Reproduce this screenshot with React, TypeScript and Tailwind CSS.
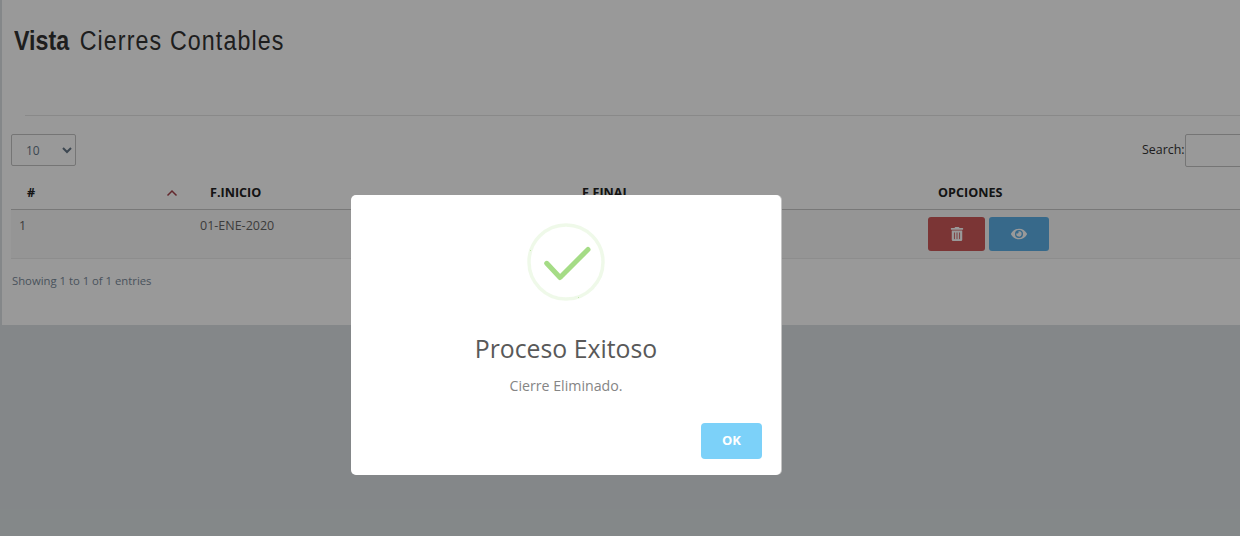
import { FaEye, FaTrashAlt } from 'react-icons/fa';

const sans = "font-['Open_Sans',sans-serif]";

function SuccessIcon() {
  return (
    <svg width="80" height="80" viewBox="0 0 80 80" className="block">
      <circle cx="40" cy="40" r="37" fill="none" stroke="#a5dc86" strokeOpacity="0.18" strokeWidth="3.5" />
      <path d="M4 28 L5 29 M52 75 L53 76" stroke="#a5dc86" strokeOpacity="0.6" strokeWidth="1" />
      <path d="M20.7 41.3 L34 55.5 L62 27.5" fill="none" stroke="#a5dc86" strokeWidth="5" strokeLinecap="round" strokeLinejoin="round" />
    </svg>
  );
}

export default function App() {
  return (
    <div className={`relative h-[536px] w-[1240px] overflow-hidden bg-[#dce2e5] ${sans}`}>
      {/* Card */}
      <div className="ml-[2px] h-[325px] overflow-hidden bg-white pl-[9px]">
        <div className="pl-[3px] pt-[25px]">
          {/* no narrow family installed, so squeeze the heading */}
          <h1 className="origin-left scale-x-[0.86] whitespace-nowrap font-['Liberation_Sans',sans-serif] text-[27px] leading-[32px] tracking-[1.3px] text-[#333]">
            <span className="font-bold tracking-[0px]">Vista</span> <span className="ml-[3.5px]">Cierres Contables</span>
          </h1>
        </div>

        <div className="ml-[14px] mt-[58px] h-px bg-[#e4e4e4]" />

        <div className="mt-[18px] flex h-[33px] items-start justify-between">
          <select
            defaultValue="10"
            className="h-[32px] w-[65px] rounded-[2px] border border-[#c4c4c4] bg-white pl-[10px] text-[12px] text-[#667788]"
          >
            <option value="10">10</option>
          </select>
          <div className="flex w-[98px] items-center text-[12.4px] text-[#333]">
            <span>Search:</span>
            <div className="h-[33px] w-[60px] shrink-0 rounded-[2px] border border-[#c4c4c4] bg-white" />
          </div>
        </div>

        {/* Table */}
        <div className="mt-[8px] flex h-[35px] items-center border-b border-[#c9c9c9] pt-[3px] text-[12.6px] font-bold text-[#222]">
          <span className="ml-[16px] w-[139px]">#</span>
          <svg width="12" height="8" viewBox="0 0 12 8" className="mr-[32px] -translate-y-px">
            <path d="M1.5 6.5 L6 2 L10.5 6.5" fill="none" stroke="#a5434b" strokeWidth="1.5" />
          </svg>
          <span className="w-[372px]">F.INICIO</span>
          <span className="w-[356px]">F.FINAL</span>
          <span>OPCIONES</span>
        </div>
        <div className="flex h-[49px] border-b border-[#ececec] bg-[#f9f9f9] text-[12.5px] text-[#666]">
          <span className="ml-[8px] w-[181px] pt-[7px]">1</span>
          <span className="w-[728px] pt-[7px]">01-ENE-2020</span>
          <div className="flex gap-[4px] pt-[7px]">
            <button className="flex h-[34px] w-[57px] items-center justify-center rounded-[3px] bg-[#cd5959] text-[14px] text-white">
              <FaTrashAlt />
            </button>
            <button className="flex h-[34px] w-[60px] items-center justify-center rounded-[3px] bg-[#5cb0e7] text-[16px] text-white">
              <FaEye />
            </button>
          </div>
        </div>

        <p className="pl-[1px] pt-[13px] text-[11.3px] leading-[18px] text-[#7a8a9a]">Showing 1 to 1 of 1 entries</p>
      </div>

      {/* Overlay */}
      <div className="absolute inset-0 bg-black/40 pl-[351px] pt-[195px]">
        <div className="flex h-[280px] w-[430px] flex-col items-center rounded-[5px] bg-white shadow-[1px_0_0_#c4c4c4]">
          <div className="pt-[27px]">
            <SuccessIcon />
          </div>
          <h2 className="mt-[30px] text-[24.8px] font-medium leading-[32px] text-[#595959]">Proceso Exitoso</h2>
          <p className="mt-[12px] text-[14.2px] leading-[20px] text-[#858585]">Cierre Eliminado.</p>
          <div className="mt-[27px] flex w-full justify-end pr-[19px]">
            <button className="h-[36px] w-[61px] rounded-[4px] bg-[#7cd1f9] text-[13px] font-bold text-white">OK</button>
          </div>
        </div>
      </div>
    </div>
  );
}
